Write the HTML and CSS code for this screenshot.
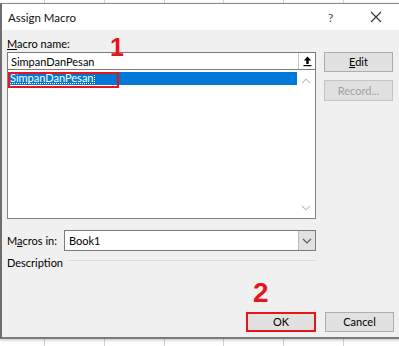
FILE: index.html
```html
<!DOCTYPE html>
<html>
<head>
<meta charset="utf-8">
<link rel="stylesheet" href="styles.css">
</head>
<body>
<div class="sheet">
  <div class="dialog">
    <div class="titlebar">
      <span class="title">Assign Macro</span>
      <span class="help">?</span>
      <span class="close">
        <svg width="12" height="12" viewBox="0 0 12 12"><path d="M1 1 L11 11 M11 1 L1 11" stroke="#333" stroke-width="1.1" fill="none"/></svg>
      </span>
    </div>
    <div class="body">
      <div class="content">
        <div class="left">
          <div class="label"><u>M</u>acro name:</div>
          <div class="input">
            <span class="input-text">SimpanDanPesan</span>
            <span class="ref-btn">
              <svg width="11" height="12" viewBox="0 0 11 12"><path d="M5.5 1.5 L1.8 5.6 H4.3 V9 H6.7 V5.6 H9.2 Z" fill="#000"/><rect x="1.5" y="10" width="8" height="1.2" fill="#000"/></svg>
            </span>
          </div>
          <div class="list">
            <div class="items">
              <div class="item selected"><span class="focus">SimpanDanPesan</span></div>
            </div>
            <div class="scroll">
              <svg width="10" height="6" viewBox="0 0 10 6"><path d="M1 5 L5 1 L9 5" stroke="#c4c4c4" stroke-width="1.2" fill="none"/></svg>
              <svg width="10" height="6" viewBox="0 0 10 6"><path d="M1 1 L5 5 L9 1" stroke="#c4c4c4" stroke-width="1.2" fill="none"/></svg>
            </div>
            <div class="mark mark-box"></div>
            <div class="num num-1">1</div>
          </div>
          <div class="macros-row">
            <span class="label">M<u>a</u>cros in:</span>
            <div class="combo">
              <span class="combo-text">Book1</span>
              <span class="combo-btn">
                <svg width="10" height="6" viewBox="0 0 10 6"><path d="M1 1 L5 5 L9 1" stroke="#555" stroke-width="1.1" fill="none"/></svg>
              </span>
            </div>
          </div>
          <div class="desc">
            <span class="label">Description</span>
            <span class="desc-line"></span>
          </div>
        </div>
        <div class="right">
          <button class="btn"><u>E</u>dit</button>
          <button class="btn disabled">Record...</button>
        </div>
      </div>
      <div class="footer">
        <div class="num num-2">2</div>
        <button class="btn ok">OK</button>
        <button class="btn">Cancel</button>
      </div>
    </div>
  </div>
</div>
</body>
</html>
```
FILE: styles.css
```css
* { box-sizing: border-box; }
html, body { margin: 0; padding: 0; }
body {
  width: 399px;
  height: 346px;
  overflow: hidden;
  font-family: Lato, "Noto Sans", "Liberation Sans", sans-serif;
  font-size: 11px;
  color: #000;
}
.sheet {
  position: relative;
  width: 399px;
  height: 346px;
  background-color: #fff;
  background-image:
    linear-gradient(#d4d4d4, #d4d4d4),
    linear-gradient(#d4d4d4, #d4d4d4),
    linear-gradient(#d4d4d4, #d4d4d4),
    linear-gradient(#d4d4d4, #d4d4d4),
    linear-gradient(#d4d4d4, #d4d4d4),
    linear-gradient(#d4d4d4, #d4d4d4);
  background-size: 1px 100%;
  background-repeat: no-repeat;
  background-position: 44px 0, 104px 0, 164px 0, 223px 0, 283px 0, 343px 0;
}
.dialog {
  position: absolute;
  top: 3px;
  left: 0;
  width: 404px;
  height: 336px;
  border: 1px solid #8a8a8a;
  border-left: 2px solid #6e6e6e;
  border-bottom: 2px solid #7a7a7a;
  display: flex;
  flex-direction: column;
  box-shadow: 0 1px 3px rgba(0,0,0,0.25);
}
.titlebar {
  height: 26px;
  background: #fff;
  display: flex;
  align-items: center;
  padding-left: 6px;
}
.title { font-size: 11.5px; flex: 1; color: #111; }
.help { width: 12px; margin-right: 30px; color: #444; font-size: 12px; }
.close { width: 12px; margin-right: 21px; display: flex; }
.body {
  flex: 1;
  background: #f0f0f0;
  display: flex;
  flex-direction: column;
  padding: 6px 0 5px 5px;
}
.content {
  display: grid;
  grid-template-columns: 309px 69px;
  column-gap: 8px;
}
.left { display: flex; flex-direction: column; position: relative; }
.label { line-height: 15px; height: 15px; white-space: nowrap; }
.input {
  margin-top: 1px;
  height: 18px;
  background: #fff;
  border: 1px solid #7a7a7a;
  display: flex;
  align-items: center;
  padding-left: 3px;
}
.input-text { flex: 1; }
.ref-btn {
  width: 17px;
  height: 16px;
  border-left: 1px solid #c8c8c8;
  display: flex;
  align-items: center;
  justify-content: center;
}
.list {
  position: relative;
  height: 149px;
  background: #fff;
  border: 1px solid #828282;
  border-top: none;
  display: flex;
}
.items { flex: 1; padding-top: 2px; }
.item { height: 13px; line-height: 12px; padding-left: 1px; }
.item.selected { background: #0078d7; color: #fff; }
.focus { outline: 1px dotted #fff; outline-offset: -1px; padding: 0 1px; }
.scroll {
  width: 18px;
  display: flex;
  flex-direction: column;
  justify-content: space-between;
  align-items: center;
  padding: 8px 0 7px;
}
.mark-box {
  position: absolute;
  left: 0;
  top: 2px;
  width: 111px;
  height: 16px;
  border: 2px solid #e8141c;
}
.num {
  position: absolute;
  color: #e8141c;
  font-family: "Liberation Sans", Arial, sans-serif;
  font-weight: bold;
  line-height: 1;
}
.num-1 { left: 102px; top: -35px; font-size: 25px; }
.macros-row {
  margin-top: 11px;
  height: 21px;
  display: flex;
  align-items: center;
}
.macros-row .label { width: 57px; }
.combo {
  flex: 1;
  height: 21px;
  background: #fff;
  border: 1px solid #7a7a7a;
  display: flex;
  align-items: center;
  padding-left: 4px;
}
.combo-text { flex: 1; }
.combo-btn {
  width: 17px;
  height: 19px;
  background: #e1e1e1;
  border-left: 1px solid #b8b8b8;
  display: flex;
  align-items: center;
  justify-content: center;
}
.desc {
  margin-top: 4px;
  display: flex;
  align-items: center;
  height: 15px;
}
.desc-line { flex: 1; height: 1px; background: #dcdcdc; margin-left: 6px; margin-top: -5px; }
.right {
  padding-top: 16px;
  display: flex;
  flex-direction: column;
  gap: 8px;
}
.btn {
  font-family: inherit;
  font-size: 11px;
  height: 20px;
  width: 69px;
  padding: 0;
  background: #e1e1e1;
  border: 1px solid #adadad;
  color: #000;
  line-height: 16px;
}
.btn.disabled { height: 21px; color: #a0a0a0; background: #e0e0e0; border-color: #c4c4c4; }
.footer {
  position: relative;
  margin-top: auto;
  display: flex;
  gap: 9px;
  padding-left: 239px;
}
.btn.ok { width: 70px; border: 2px solid #e8141c; }
.num-2 { left: 246px; top: -33px; font-size: 28px; }
```
